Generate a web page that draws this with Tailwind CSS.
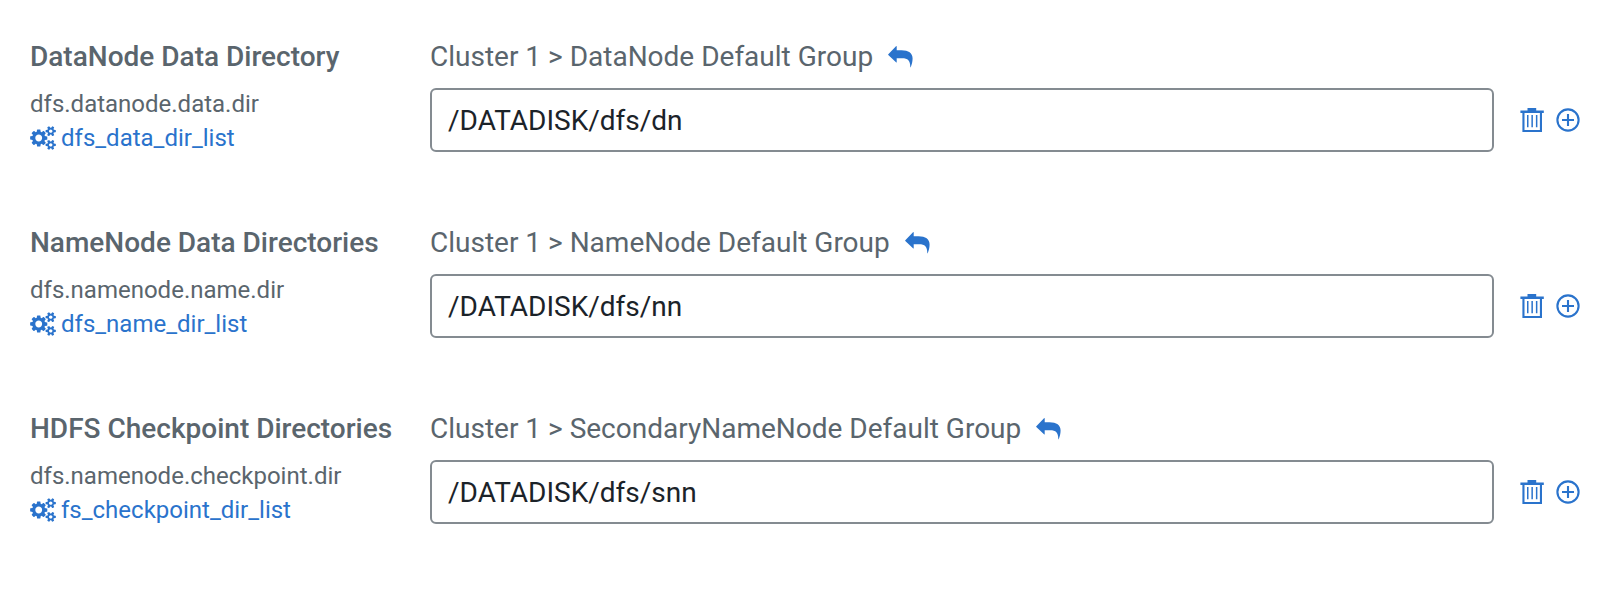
<!DOCTYPE html>
<html lang="en">
<head>
<meta charset="utf-8">
<title>HDFS Directories</title>
<script src="https://cdn.jsdelivr.net/npm/@tailwindcss/browser@4"></script>
</head>
<body class="bg-white font-[Roboto,sans-serif] text-[#5a656d] antialiased">
<svg class="hidden" aria-hidden="true">
  <symbol id="cogs" viewBox="0 0 1920 1792"><path fill="currentColor" d="M896 896q0-106-75-181t-181-75-181 75-75 181 75 181 181 75 181-75 75-181zm768 512q0-52-38-90t-90-38-90 38-38 90q0 53 37.500 90.500t90.500 37.500 90.500-37.500 37.500-90.500zm0-1024q0-52-38-90t-90-38-90 38-38 90q0 53 37.500 90.500t90.500 37.500 90.500-37.500 37.500-90.500zm-384 421v185q0 10-7 19.500t-16 10.500l-155 24q-11 35-32 76 34 48 90 115 7 11 7 20 0 12-7 19-23 30-82.500 89.500t-78.500 59.500q-11 0-21-7l-115-90q-37 19-77 31-11 108-23 155-7 24-30 24h-186q-11 0-20-7.500t-10-17.500l-23-153q-34-10-75-31l-118 89q-7 7-20 7-11 0-21-8-144-133-144-160 0-9 7-19 10-14 41-53t47-61q-23-44-35-82l-152-24q-10-1-17-9.500t-7-19.500v-185q0-10 7-19.500t16-10.500l155-24q11-35 32-76-34-48-90-115-7-11-7-20 0-12 7-20 22-30 82-89t79-59q11 0 21 7l115 90q34-18 77-32 11-108 23-154 7-24 30-24h186q11 0 20 7.500t10 17.500l23 153q34 10 75 31l118-89q8-7 20-7 11 0 21 8 144 133 144 160 0 8-7 19-12 16-42 54t-45 60q23 48 34 82l152 23q10 2 17 10.500t7 19.500zm640 533v140q0 16-149 31-12 27-30 52 51 113 51 138 0 4-4 7-122 71-124 71-8 0-46-47t-52-68q-20 2-30 2t-30-2q-14 21-52 68t-46 47q-2 0-124-71-4-3-4-7 0-25 51-138-18-25-30-52-149-15-149-31v-140q0-16 149-31 13-29 30-52-51-113-51-138 0-4 4-7 4-2 35-20t59-34 30-16q8 0 46 46.500t52 67.500q20-2 30-2t30 2q51-71 92-112l6-2q4 0 124 70 4 3 4 7 0 25-51 138 17 23 30 52 149 15 149 31zm0-1024v140q0 16-149 31-12 27-30 52 51 113 51 138 0 4-4 7-122 71-124 71-8 0-46-47t-52-68q-20 2-30 2t-30-2q-14 21-52 68t-46 47q-2 0-124-71-4-3-4-7 0-25 51-138-18-25-30-52-149-15-149-31v-140q0-16 149-31 13-29 30-52-51-113-51-138 0-4 4-7 4-2 35-20t59-34 30-16q8 0 46 46.500t52 67.500q20-2 30-2t30 2q51-71 92-112l6-2q4 0 124 70 4 3 4 7 0 25-51 138 17 23 30 52 149 15 149 31z"/></symbol>
  <symbol id="undo" viewBox="0 0 26 24"><path fill="currentColor" d="M1.300 9.300 9 1.300q.7-.6.7.3v3.700h4.800C21.500 5.300 25.600 8.200 25.600 13.500c0 3.200-.8 6-1.800 8.500q-.5 1-.5-.2c0-6-2.300-8.500-8.300-8.500H9.700V17q0 .9-.7.300L1.300 9.900q-.4-.3 0-.6z"/></symbol>
  <symbol id="trash" viewBox="0 0 24 24"><path fill="currentColor" d="M7.500 0h8.700v2.500h7.600V5H22v19H2.400V5H.4V2.500h7.100zM4.500 5v16.900h15.400V5zM7 7h1.500v12.300H7zm4.400 0h1.500v12.300h-1.500zm4.500 0h1.500v12.300h-1.500z"/></symbol>
  <symbol id="add" viewBox="0 0 24 24"><path fill="none" stroke="currentColor" stroke-width="2.100" d="M12 1.400a10.600 10.600 0 1 0 0 21.200a10.600 10.600 0 1 0 0-21.200zM12 6v12M6 12h12"/></symbol>
</svg>
<main class="pt-[37px] pl-[30px]">
  <section class="flex h-[186px]">
    <div class="w-[400px] shrink-0">
      <h2 class="text-[28px] leading-10 font-medium whitespace-nowrap">DataNode Data Directory</h2>
      <p class="mt-[10px] text-2xl leading-[34px]">dfs.datanode.data.dir</p>
      <a class="flex items-center text-2xl leading-[34px] text-[#2a73cc]"><svg class="mr-[5px] h-6 w-[26px]"><use href="#cogs"/></svg>dfs_data_dir_list</a>
    </div>
    <div class="w-[1064px] shrink-0">
      <div class="flex items-center text-[28px] leading-10">Cluster 1 &gt; DataNode Default Group<svg class="ml-[14px] h-6 w-[26px] text-[#2a73cc]"><use href="#undo"/></svg></div>
      <div class="mt-[11px] flex h-16 items-center rounded-md border-2 border-[#848b91] px-4 pt-0.5 text-[28px] text-[#1b2329]">/DATADISK/dfs/dn</div>
    </div>
    <div class="mt-[51px] ml-[26px] flex h-16 items-center gap-3 text-[#2a73cc]"><svg class="size-6"><use href="#trash"/></svg><svg class="size-6"><use href="#add"/></svg></div>
  </section>
  <section class="flex h-[186px]">
    <div class="w-[400px] shrink-0">
      <h2 class="text-[28px] leading-10 font-medium whitespace-nowrap">NameNode Data Directories</h2>
      <p class="mt-[10px] text-2xl leading-[34px]">dfs.namenode.name.dir</p>
      <a class="flex items-center text-2xl leading-[34px] text-[#2a73cc]"><svg class="mr-[5px] h-6 w-[26px]"><use href="#cogs"/></svg>dfs_name_dir_list</a>
    </div>
    <div class="w-[1064px] shrink-0">
      <div class="flex items-center text-[28px] leading-10">Cluster 1 &gt; NameNode Default Group<svg class="ml-[14px] h-6 w-[26px] text-[#2a73cc]"><use href="#undo"/></svg></div>
      <div class="mt-[11px] flex h-16 items-center rounded-md border-2 border-[#848b91] px-4 pt-0.5 text-[28px] text-[#1b2329]">/DATADISK/dfs/nn</div>
    </div>
    <div class="mt-[51px] ml-[26px] flex h-16 items-center gap-3 text-[#2a73cc]"><svg class="size-6"><use href="#trash"/></svg><svg class="size-6"><use href="#add"/></svg></div>
  </section>
  <section class="flex h-[183px]">
    <div class="w-[400px] shrink-0">
      <h2 class="text-[28px] leading-10 font-medium whitespace-nowrap">HDFS Checkpoint Directories</h2>
      <p class="mt-[10px] text-2xl leading-[34px]">dfs.namenode.checkpoint.dir</p>
      <a class="flex items-center text-2xl leading-[34px] text-[#2a73cc]"><svg class="mr-[5px] h-6 w-[26px]"><use href="#cogs"/></svg>fs_checkpoint_dir_list</a>
    </div>
    <div class="w-[1064px] shrink-0">
      <div class="flex items-center text-[28px] leading-10">Cluster 1 &gt; SecondaryNameNode Default Group<svg class="ml-[14px] h-6 w-[26px] text-[#2a73cc]"><use href="#undo"/></svg></div>
      <div class="mt-[11px] flex h-16 items-center rounded-md border-2 border-[#848b91] px-4 pt-0.5 text-[28px] text-[#1b2329]">/DATADISK/dfs/snn</div>
    </div>
    <div class="mt-[51px] ml-[26px] flex h-16 items-center gap-3 text-[#2a73cc]"><svg class="size-6"><use href="#trash"/></svg><svg class="size-6"><use href="#add"/></svg></div>
  </section>
</main>
</body>
</html>
